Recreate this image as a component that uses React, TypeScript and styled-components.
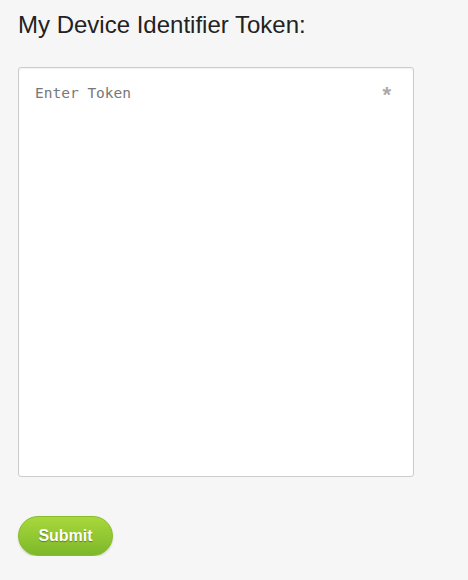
import React from 'react';
import styled, { createGlobalStyle } from 'styled-components';

const GlobalStyle = createGlobalStyle`
	html, body {
		margin: 0;
		padding: 0;
		background: #f6f6f6;
	}
`;

const Page = styled.form`
	padding: 12px 18px 0;
	font-family: 'Liberation Sans', Arial, sans-serif;
`;

const Title = styled.h1`
	margin: 0 0 29px;
	font-size: 24px;
	font-weight: normal;
	line-height: 26px;
	color: #222;
`;

const Field = styled.div`
	position: relative;
	width: 396px;
`;

const TokenInput = styled.textarea`
	display: block;
	box-sizing: border-box;
	width: 396px;
	height: 410px;
	margin: 0;
	padding: 16px 40px 12px 16px;
	border: 1px solid #cccccc;
	border-radius: 3px;
	background: #fff;
	box-shadow: inset 0 1px 2px rgba(0, 0, 0, 0.06);
	resize: none;
	outline: none;
	font-family: 'DejaVu Sans Mono', 'Liberation Mono', monospace;
	font-size: 14.5px;
	line-height: 18px;
	color: #333;

	&::placeholder {
		color: #777;
	}
`;

const Required = styled.span`
	position: absolute;
	top: 17px;
	right: 23px;
	font-family: 'Liberation Sans', Arial, sans-serif;
	font-size: 22px;
	font-weight: bold;
	line-height: 22px;
	color: #aaa;
`;

const SubmitButton = styled.button`
	display: block;
	margin-top: 39px;
	width: 95px;
	height: 40px;
	padding: 0;
	border: 1px solid #86bd2c;
	border-radius: 20px;
	background: linear-gradient(to bottom, #a8d83c 0%, #7db82a 100%);
	box-shadow: 0 1px 2px rgba(0, 0, 0, 0.15);
	font-family: 'Liberation Sans', Arial, sans-serif;
	font-size: 16px;
	font-weight: bold;
	color: #fff;
	text-shadow: 0 1px 1px rgba(0, 0, 0, 0.35);
	cursor: pointer;
`;

const App = () => {
	return (
		<>
			<GlobalStyle />
			<Page onSubmit={(e) => e.preventDefault()}>
				<Title>My Device Identifier Token:</Title>
				<Field>
					<TokenInput placeholder="Enter Token" />
					<Required>*</Required>
				</Field>
				<SubmitButton type="submit">Submit</SubmitButton>
			</Page>
		</>
	);
};

export default App;
